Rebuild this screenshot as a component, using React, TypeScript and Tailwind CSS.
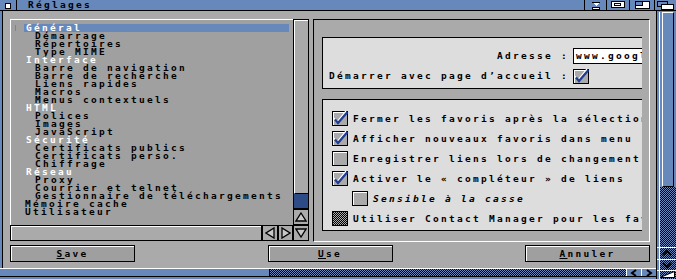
import React from "react";

function Dither({ a, b, id }: { a: string; b: string; id: string }) {
  return (
    <svg width="100%" height="100%" className="block" shapeRendering="crispEdges">
      <defs>
        <pattern id={id} width="2" height="2" patternUnits="userSpaceOnUse">
          <rect width="2" height="2" fill={b} />
          <rect width="1" height="1" fill={a} />
          <rect x="1" y="1" width="1" height="1" fill={a} />
        </pattern>
      </defs>
      <rect width="100%" height="100%" fill={`url(#${id})`} />
    </svg>
  );
}

function Check({ checked, dither }: { checked?: boolean; dither?: boolean }) {
  return (
    <div className="relative w-[16px] h-[15px] shrink-0 border border-black bg-[#aaaaaa] shadow-[inset_1px_1px_0_#ffffff]">
      {dither && (
        <div className="absolute inset-0">
          <Dither a="#000000" b="#aaaaaa" id="cbd" />
        </div>
      )}
      {checked && (
        <svg className="absolute -left-px -top-px overflow-visible" width="16" height="15" viewBox="0 0 16 15">
          <polyline points="2,7 5,11 14,0" fill="none" stroke="#ffffff" strokeWidth="1.2" />
          <polyline points="3,8.5 6,12 15.5,1" fill="none" stroke="#1e3c96" strokeWidth="2.2" />
        </svg>
      )}
    </div>
  );
}

function Tri({ dir }: { dir: "up" | "down" | "left" | "right" }) {
  const pts =
    dir === "up"
      ? "6,1 11,9 1,9"
      : dir === "down"
      ? "1,1 11,1 6,9"
      : dir === "left"
      ? "9,1 9,11 1,6"
      : "1,1 1,11 9,6";
  const w = dir === "up" || dir === "down" ? 12 : 10;
  const h = dir === "up" || dir === "down" ? 10 : 12;
  return (
    <svg width={w} height={h} viewBox={`0 0 ${w} ${h}`}>
      <polygon points={pts} fill="#c8c8c8" stroke="#000000" strokeWidth="1.3" strokeLinejoin="miter" />
    </svg>
  );
}

function Chev({ dir }: { dir: "up" | "down" | "left" | "right" }) {
  const pts =
    dir === "up"
      ? "2,7 6,3 10,7"
      : dir === "down"
      ? "2,3 6,7 10,3"
      : dir === "left"
      ? "8,1 4,4 8,7"
      : "4,1 8,4 4,7";
  return (
    <svg width="12" height={dir === "up" || dir === "down" ? 10 : 8} viewBox={`0 0 12 ${dir === "up" || dir === "down" ? 10 : 8}`}>
      <polyline points={pts} fill="none" stroke="#000000" strokeWidth="2" />
    </svg>
  );
}

type Kind = "sel" | "cat" | "sub" | "top";
const items: [string, Kind][] = [
  ["Général", "sel"],
  ["Démarrage", "sub"],
  ["Répertoires", "sub"],
  ["Type MIME", "sub"],
  ["Interface", "cat"],
  ["Barre de navigation", "sub"],
  ["Barre de recherche", "sub"],
  ["Liens rapides", "sub"],
  ["Macros", "sub"],
  ["Menus contextuels", "sub"],
  ["HTML", "cat"],
  ["Polices", "sub"],
  ["Images", "sub"],
  ["JavaScript", "sub"],
  ["Sécurité", "cat"],
  ["Certificats publics", "sub"],
  ["Certificats perso.", "sub"],
  ["Chiffrage", "sub"],
  ["Réseau", "cat"],
  ["Proxy", "sub"],
  ["Courrier et telnet", "sub"],
  ["Gestionnaire de téléchargements", "sub"],
  ["Mémoire cache", "top"],
  ["Utilisateur", "top"],
];

function Btn({ u, rest }: { u: string; rest: string }) {
  return (
    <div className="w-[125px] h-[17px] border border-black bg-[#9f9f9f] shadow-[inset_1px_1px_0_#ffffff] leading-[15px] text-center">
      <span className="underline underline-offset-[1px]">{u}</span>
      {rest}
    </div>
  );
}

export default function App() {
  return (
    <div className="w-[676px] h-[279px] overflow-hidden flex flex-col bg-[#aaaaaa] text-black font-[family-name:'DejaVu_Sans_Mono',monospace] font-bold text-[9.5px] tracking-[2.28px] select-none">
      {/* Title bar */}
      <div className="h-[11px] shrink-0 flex bg-[#6688bb] border-b border-black">
        <div className="w-[17px] h-full border-r border-black pl-[5px] pt-[3px]">
          <div className="w-[6px] h-[6px] bg-white border border-black" />
        </div>
        <div className="flex-1 pl-[11px] leading-[10px]">Réglages</div>
        <div className="w-[22px] h-full border-l border-black flex items-center justify-center">
          <svg width="12" height="9" viewBox="0 0 12 9" shapeRendering="crispEdges">
            <rect x="2" y="0.5" width="8" height="1" fill="#000" />
            <polygon points="3,2 9,2 6,5" fill="#fff" />
            <rect x="2.5" y="6.5" width="7" height="2" fill="#fff" stroke="#000" strokeWidth="1" />
          </svg>
        </div>
        <div className="w-[23px] h-full border-l border-black flex items-center justify-center">
          <svg width="14" height="8" viewBox="0 0 14 8" shapeRendering="crispEdges">
            <rect x="0.5" y="0.5" width="13" height="6" fill="#fff" stroke="#000" />
            <rect x="3.5" y="2.5" width="6" height="2" fill="#fff" stroke="#000" />
          </svg>
        </div>
        <div className="w-[25px] h-full border-l border-black flex items-center justify-center">
          <svg width="15" height="8" viewBox="0 0 15 8" shapeRendering="crispEdges">
            <rect x="0.5" y="0.5" width="14" height="7" fill="#fff" stroke="#000" />
            <rect x="0.5" y="0.5" width="7" height="4" fill="#6688bb" stroke="#000" />
          </svg>
        </div>
        <div className="w-[22px] h-full border-l border-black flex items-center justify-center">
          <svg width="17" height="9" viewBox="0 0 17 9" shapeRendering="crispEdges">
            <rect x="0.5" y="0.5" width="10" height="5" fill="#6688bb" stroke="#000" />
            <rect x="4.5" y="3.5" width="12" height="5" fill="#fff" stroke="#000" />
          </svg>
        </div>
      </div>

      <div className="flex-1 flex min-h-0">
        <div className="flex-1 flex flex-col min-w-0">
          <div className="flex-1 flex min-h-0">
            <div className="w-[3px] bg-[#6688bb] border-r border-black" />
            {/* Content */}
            <div className="flex-1 pt-[8px] pl-[7px] pr-[6px] pb-[6px] flex flex-col gap-[3px]">
              <div className="h-[223px] flex gap-[4px]">
                {/* Left part */}
                <div className="w-[299px] h-[222px] flex">
                  <div className="w-[283px] flex flex-col">
                    <div className="h-[206px] border-t border-l border-white bg-[#a0a0a0] pt-[4px] leading-[8px] overflow-hidden">
                      {items.map(([t, k], i) => (
                        <div key={i} className="flex h-[8px]">
                          <div className="w-[13px] shrink-0 pl-[4px] pt-[1px]">
                            {k === "sel" && <div className="w-px h-[6px] bg-[#6688bb]" />}
                          </div>
                          <div
                            className={
                              k === "sel"
                                ? "w-[265px] bg-[#6688bb] text-white pl-[2px] whitespace-nowrap"
                                : k === "cat"
                                ? "w-[265px] text-white pl-[2px] whitespace-nowrap"
                                : k === "top"
                                ? "w-[265px] pl-[1px] whitespace-nowrap"
                                : "w-[265px] pl-[11px] whitespace-nowrap"
                            }
                          >
                            {t}
                          </div>
                        </div>
                      ))}
                    </div>
                    <div className="h-[16px] flex">
                      <div className="w-[252px] border border-black bg-[#aaaaaa] shadow-[inset_1px_1px_0_#ffffff]" />
                      <div className="w-[16px] border border-black bg-[#aaaaaa] flex items-center justify-center">
                        <Tri dir="left" />
                      </div>
                      <div className="w-[15px] border border-black bg-[#aaaaaa] flex items-center justify-center">
                        <Tri dir="right" />
                      </div>
                    </div>
                  </div>
                  <div className="w-[16px] flex flex-col">
                    <div className="h-[190px] border border-black bg-[#2d4b86] flex flex-col">
                      <div className="h-[174px] bg-[#aaaaaa] border-t border-l border-white border-b border-b-black" />
                    </div>
                    <div className="h-[16px] border border-black bg-[#aaaaaa] flex items-center justify-center">
                      <Tri dir="up" />
                    </div>
                    <div className="h-[16px] border border-black bg-[#aaaaaa] flex items-center justify-center">
                      <Tri dir="down" />
                    </div>
                  </div>
                </div>

                {/* Right panel */}
                <div className="w-[337px] h-[223px] border-t border-l border-black border-r border-b border-r-white border-b-white pt-[17px] pl-[8px] pr-[7px] pb-[10px]">
                  <div className="h-full overflow-hidden flex flex-col gap-[10px]">
                    <div className="w-[420px] shrink-0 h-[52px] border border-black bg-[#dddddd] pt-[10px] pl-[6px] flex flex-col gap-[4px]">
                      <div className="flex items-center h-[16px] gap-[4px]">
                        <div className="w-[240px] text-right leading-[16px] whitespace-nowrap">Adresse :</div>
                        <div className="h-[16px] w-[140px] border border-black bg-white pl-[2px] leading-[14px] whitespace-nowrap">
                          www.google.fr
                        </div>
                      </div>
                      <div className="flex items-center h-[16px] gap-[4px]">
                        <div className="w-[240px] text-right leading-[16px] whitespace-nowrap">Démarrer avec page d’accueil :</div>
                        <Check checked />
                      </div>
                    </div>

                    <div className="w-[420px] shrink-0 border border-black bg-[#dddddd] pt-[11px] pb-[4px] pl-[9px] flex flex-col gap-[5px]">
                      <div className="flex items-center gap-[5px] h-[15px]">
                        <Check checked />
                        <div className="leading-[15px] whitespace-nowrap">Fermer les favoris après la sélection</div>
                      </div>
                      <div className="flex items-center gap-[5px] h-[15px]">
                        <Check checked />
                        <div className="leading-[15px] whitespace-nowrap">Afficher nouveaux favoris dans menu</div>
                      </div>
                      <div className="flex items-center gap-[5px] h-[15px]">
                        <Check />
                        <div className="leading-[15px] whitespace-nowrap">Enregistrer liens lors de changement</div>
                      </div>
                      <div className="flex items-center gap-[5px] h-[15px]">
                        <Check checked />
                        <div className="leading-[15px] whitespace-nowrap">Activer le « compléteur » de liens</div>
                      </div>
                      <div className="flex items-center gap-[5px] h-[15px] pl-[20px]">
                        <Check />
                        <div className="leading-[15px] whitespace-nowrap italic">Sensible à la casse</div>
                      </div>
                      <div className="flex items-center gap-[5px] h-[15px]">
                        <Check dither />
                        <div className="leading-[15px] whitespace-nowrap">Utiliser Contact Manager pour les favoris</div>
                      </div>
                    </div>
                  </div>
                </div>
              </div>

              {/* Buttons */}
              <div className="h-[17px] flex justify-between">
                <Btn u="S" rest="ave" />
                <Btn u="U" rest="se" />
                <Btn u="A" rest="nnuler" />
              </div>
            </div>
          </div>

          {/* Bottom border */}
          <div className="h-[11px] shrink-0 flex flex-col bg-[#6688bb]">
            <div className="h-px bg-white" />
            <div className="h-[7px] flex">
              <div className="w-[270px] border-r border-black" />
              <div className="flex-1">
                <Dither a="#000000" b="#6688bb" id="bd" />
              </div>
              <div className="w-[15px] border-l border-white flex items-center justify-center">
                <Chev dir="left" />
              </div>
              <div className="w-[15px] border-l border-white flex items-center justify-center">
                <Chev dir="right" />
              </div>
            </div>
            <div className="h-px bg-black" />
          </div>
        </div>

        {/* Right border */}
        <div className="w-[20px] shrink-0 flex flex-col bg-[#6688bb] border-l border-black">
          <div className="h-[236px] pl-[2px] pt-[1px] flex flex-col">
            <div className="flex-1 flex flex-col border-l border-white">
              <div className="h-[175px] mx-[2px] bg-[#6688bb] border-t border-l border-white border-r border-b border-r-black border-b-black" />
              <div className="flex-1">
                <Dither a="#000000" b="#6688bb" id="rd" />
              </div>
            </div>
          </div>
          <div className="h-[12px] border-t border-white flex items-center justify-center">
            <Chev dir="up" />
          </div>
          <div className="h-[12px] border-t border-white flex items-center justify-center">
            <Chev dir="down" />
          </div>
          <div className="flex-1 border-t border-white flex items-end justify-end pr-[1px] pb-[1px]">
            <svg width="16" height="7" viewBox="0 0 16 7">
              <polygon points="1,6.5 15.5,6.5 15.5,0.5" fill="#ffffff" stroke="#000000" strokeWidth="1" />
            </svg>
          </div>
        </div>
      </div>
    </div>
  );
}
